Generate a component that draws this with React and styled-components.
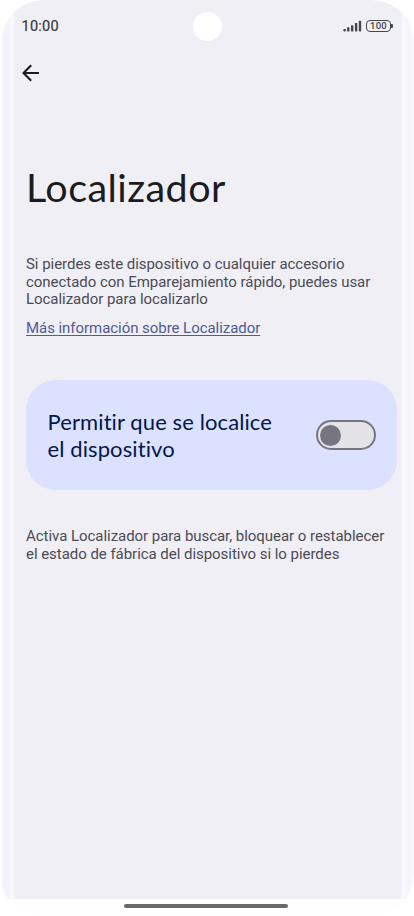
import {useState} from "react";
import styled, {createGlobalStyle} from "styled-components";

function App() {
    const [enabled, setEnabled] = useState(false)

    return (
        <>
            <GlobalStyle/>
            <Phone>
                <Screen>
                    <StatusBar>
                        <Clock>10:00</Clock>
                        <StatusIcons>
                            <SignalIcon/>
                            <Battery>100</Battery>
                        </StatusIcons>
                        <Camera/>
                    </StatusBar>
                    <BackButton aria-label="Atrás">
                        <BackIcon/>
                    </BackButton>
                    <Content>
                        <Title>Localizador</Title>
                        <Text>
                            Si pierdes este dispositivo o cualquier accesorio<br/>
                            conectado con Emparejamiento rápido, puedes usar<br/>
                            Localizador para localizarlo
                        </Text>
                        <Link href="#">Más información sobre Localizador</Link>
                        <Card>
                            <CardTitle>
                                Permitir que se localice<br/>
                                el dispositivo
                            </CardTitle>
                            <Switch role="switch" aria-checked={enabled} $on={enabled} onClick={() => setEnabled(!enabled)}>
                                <Thumb/>
                            </Switch>
                        </Card>
                        <Text>
                            Activa Localizador para buscar, bloquear o restablecer<br/>
                            el estado de fábrica del dispositivo si lo pierdes
                        </Text>
                    </Content>
                </Screen>
                <NavBar>
                    <Handle/>
                </NavBar>
            </Phone>
        </>
    )
}

const SignalIcon = () => (
    <svg width="19" height="12" viewBox="0 0 19 12" fill="#45464b">
        <rect x="0.3" y="9" width="2.6" height="2.4" rx="0.8"/>
        <rect x="4.1" y="7.3" width="2.4" height="4.1" rx="0.6"/>
        <rect x="8" y="5.3" width="2.4" height="6.1" rx="0.6"/>
        <rect x="11.9" y="3" width="2.4" height="8.4" rx="0.6"/>
        <rect x="15.8" y="0.8" width="2.4" height="10.6" rx="0.6"/>
    </svg>
)

const BackIcon = () => (
    <svg width="18" height="18" viewBox="0 0 18 18" fill="none" stroke="#1b1b21" strokeWidth="2.1">
        <path d="M17 9H1.5M9.2 1.2L1.5 9L9.2 16.8"/>
    </svg>
)

export default App;

const GlobalStyle = createGlobalStyle`
  * {
    box-sizing: border-box;
  }

  body {
    margin: 0;
    background: #fff;
    font-family: Roboto, sans-serif;
  }
`

const Phone = styled.div`
  width: 414px;
  height: 916px;
  padding-left: 2px;
  display: flex;
  flex-direction: column;
  overflow: hidden;
  background: #fefefe;
  border-radius: 42px;
`

const Screen = styled.main`
  height: 899px;
  display: flex;
  flex-direction: column;
  border-radius: 42px 42px 0 0;
  background: linear-gradient(90deg, #f5f4fc 0, #f3f2fa 7px, #f7f7fc 9px, #f7f7fc 11px, #f0eff6 13px, #f0eff6 398px, #f5f5fb 400px, #fafafe 402px, #f4f4fb 404px, #f4f4fb 407px, #f9f9fe 410px, #f5f5fb 412px);
`

const StatusBar = styled.header`
  position: relative;
  height: 52px;
  padding: 0 21px 0 19px;
  display: flex;
  align-items: center;
  justify-content: space-between;
`

const Clock = styled.span`
  padding: 2px 0 0 0.5px;
  font-size: 14.5px;
  font-weight: 400;
  line-height: 18px;
  letter-spacing: 0.25px;
  color: #36373c;
  -webkit-text-stroke: 0.2px #36373c;
`

const StatusIcons = styled.div`
  display: flex;
  align-items: center;
  gap: 4px;
`

const Battery = styled.div`
  position: relative;
  width: 25px;
  height: 12px;
  border: 1.5px solid #45464b;
  border-radius: 4px;
  font-size: 9.5px;
  font-weight: 500;
  line-height: 10px;
  text-align: center;
  color: #45464b;
  letter-spacing: 0.2px;
  margin-right: 2px;

  &::after {
    content: '';
    position: absolute;
    right: -3px;
    top: 3px;
    width: 2px;
    height: 4px;
    border-radius: 0 1px 1px 0;
    background: #45464b;
  }
`

const Camera = styled.div`
  position: absolute;
  left: 191px;
  top: 12px;
  width: 29px;
  height: 29px;
  border-radius: 50%;
  background: #fff;
`

const BackButton = styled.button`
  width: 18px;
  height: 18px;
  margin: 12px 0 0 20px;
  padding: 0;
  border: 0;
  background: none;
  display: flex;
`

const Content = styled.section`
  padding: 81px 17px 0 24px;
  display: flex;
  flex-direction: column;
  align-items: flex-start;
`

const Title = styled.h1`
  margin: 0 0 45px;
  font-family: Lato, sans-serif;
  font-size: 39.5px;
  font-weight: 400;
  line-height: 48px;
  letter-spacing: 0.45px;
  color: #1b1b21;
`

const Text = styled.p`
  margin: 0;
  font-size: 15px;
  line-height: 17.6px;
  letter-spacing: -0.04px;
  color: #4b4b53;
`

const Link = styled.a`
  margin-top: 10px;
  font-size: 15px;
  line-height: 18px;
  letter-spacing: -0.05px;
  color: #4d5c92;
  text-underline-offset: 2px;
`

const Card = styled.div`
  width: 371px;
  height: 110px;
  margin: 43.7px 0 38px;
  padding: 0 21.5px 0 21.5px;
  display: flex;
  align-items: center;
  justify-content: space-between;
  border-radius: 30px;
  background: #dce1ff;
`

const CardTitle = styled.h2`
  margin: 0 0 1px;
  font-family: Lato, sans-serif;
  font-size: 22px;
  font-weight: 400;
  line-height: 27px;
  letter-spacing: 0.1px;
  font-variant-ligatures: none;
  white-space: nowrap;
  color: #03174b;
`

const Switch = styled.button`
  width: 60px;
  height: 30px;
  padding: 0 2.5px;
  display: flex;
  align-items: center;
  justify-content: ${({$on}) => ($on ? 'flex-end' : 'flex-start')};
  border: 2px solid #777680;
  border-radius: 15px;
  background: #e3e2e7;
`

const Thumb = styled.span`
  width: 21px;
  height: 21px;
  border-radius: 50%;
  background: #777680;
`

const NavBar = styled.footer`
  height: 17px;
  padding-top: 5px;
  display: flex;
  justify-content: center;
`

const Handle = styled.div`
  width: 164px;
  height: 4px;
  margin-right: 5px;
  border-radius: 2px;
  background: #69696b;
`
